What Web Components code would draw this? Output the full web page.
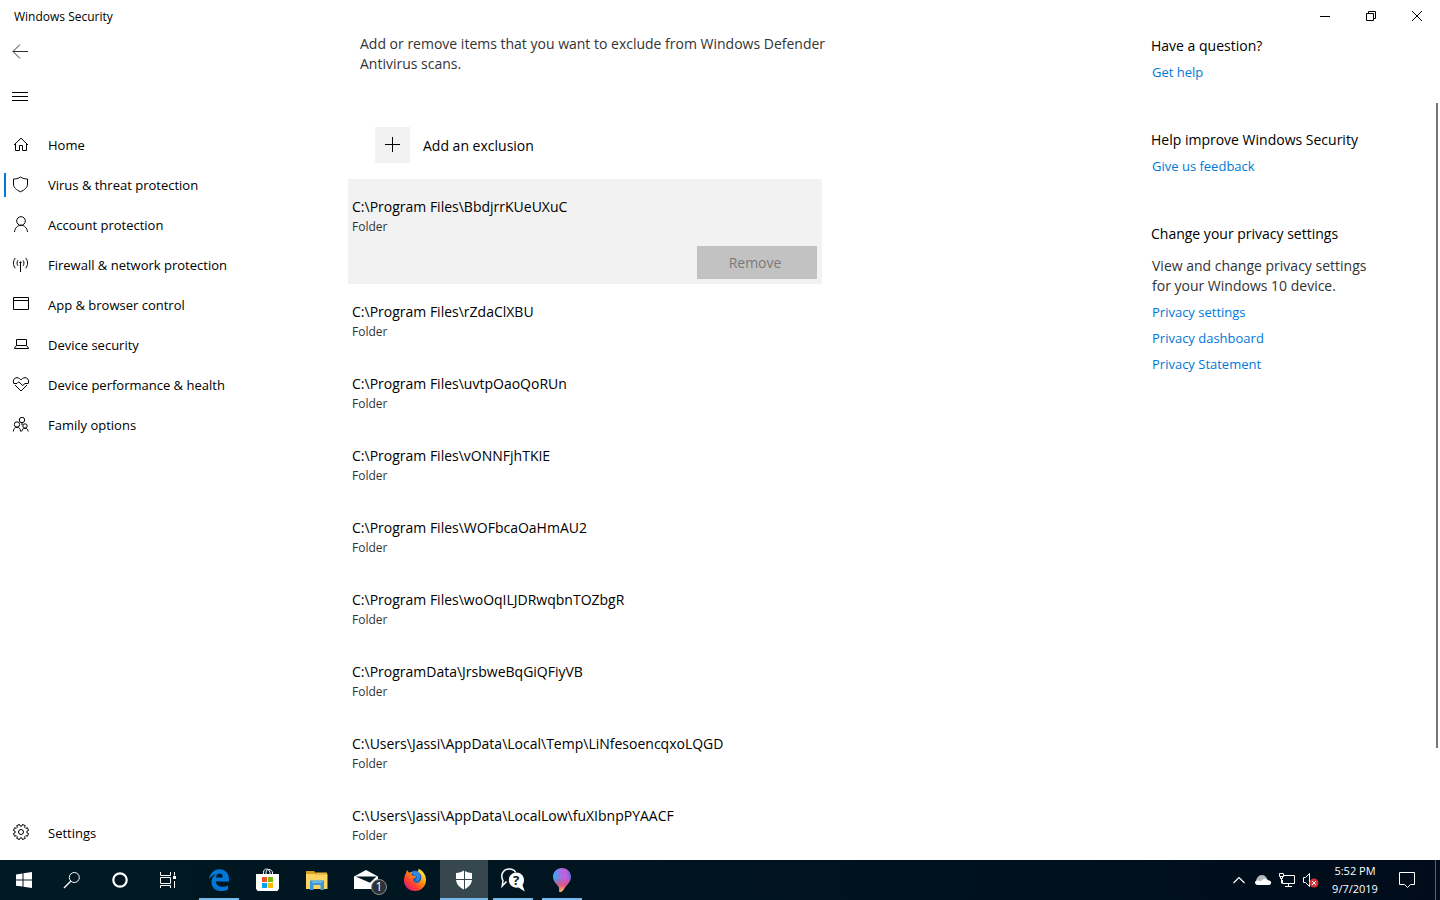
<!DOCTYPE html>
<html lang="en">
<head>
<meta charset="utf-8">
<title>Windows Security</title>
<style>
  html, body {
    height: 100%;
    margin: 0;
  }
  body {
    overflow: hidden;
    background: white;
    color: black;
    font-family: "Open Sans", "Noto Sans", sans-serif;
    font-size: 14px;
    line-height: 20px;
  }
</style>
</head>
<body>
<sec-desktop></sec-desktop>
<script>
  // Outline of a cog with eight teeth.
  const gearPath = (cx, cy, outer, inner) => {
    const points = [];
    for (let i = 0; i < 8; i++) {
      const a = i * Math.PI / 4 + Math.PI / 8;
      for (const [d, r] of [[-.24, inner], [-.2, outer], [.2, outer], [.24, inner]])
        points.push(`${(cx + r * Math.cos(a + d)).toFixed(2)} ${(cy + r * Math.sin(a + d)).toFixed(2)}`);
    }
    return `M${points.join("L")}Z`;
  };

  const dropPath = "M12 0C17 0 21 3.800 21 8.700c0 4-2.300 6.500-4.800 9-1.800 1.800-3 6-6 6.300-1.200 0-1-1.200-.9-2.500.2-2-.6-3.300-2.600-5.300C4.800 14.200 3 12 3 8.700 3 3.800 7 0 12 0z";

  // name: [width, height, markup]
  const icons = {
    // window controls
    minimize: [12, 12, `<path d="M1 6.500h10"/>`],
    restore: [12, 12, `<path d="M1.500 3.500h7v7h-7zM3.500 3.500v-2h7v7h-2"/>`],
    close: [12, 12, `<path d="M1 1l10 10M11 1L1 11"/>`],

    // navigation
    back: [18, 18, `<path d="M16 8.500H1M8 1.500L1 8.500l7 7" stroke="#333"/>`],
    menu: [18, 18, `<path d="M0 4.500h16M0 8.500h16M0 12.500h16"/>`],
    home: [18, 18, `<path d="M2 9L9 2.200 16 9M3.500 8v6.500h4v-5h3v5h4V8"/>`],
    shield: [18, 18, `<path d="M8.500 1C6.500 2.500 4 3 1.500 3v5c0 3.500 3 6 7 7.800 4-1.800 7-4.300 7-7.800V3C13 3 10.500 2.500 8.500 1z"/>`],
    account: [18, 18, `<circle cx="9" cy="5" r="4.300"/><path d="M2.500 16c.4-4 3-6.700 6.500-6.700s6.100 2.700 6.500 6.700"/>`],
    firewall: [18, 18, `<path d="M8.500 6v10M6 4.300c-1.300 1.800-1.300 3.800 0 5.600M11 4.300c1.300 1.800 1.300 3.800 0 5.600M3.300 2C.8 5 .8 9.200 3.300 12.200M13.700 2c2.500 3 2.500 7.200 0 10.200"/><circle cx="8.500" cy="6.500" r=".7"/>`],
    app: [18, 18, `<path d="M1.500 1.500h15v12h-15zM1.500 4.500h15"/>`],
    device: [18, 18, `<path d="M4.500 3.500h10v6h-10zM4.500 9.500l-2 2.500v.5h14V12l-2-2.500"/>`],
    health: [18, 18, `<path d="M1.500 7C.7 4 2.500 1.700 5 1.700 6.800 1.700 8 2.700 9 4c1-1.300 2.200-2.300 4-2.300 2.500 0 4.300 2.300 3.500 5.300M3 9l6 6 6-6"/><path d="M1.500 7.500h3.500l1.700-1.700 4 3.700 2.300-2h3.500"/>`],
    family: [18, 18, `<circle cx="10" cy="4" r="2.700"/><circle cx="5" cy="8.500" r="2.700"/><circle cx="13" cy="10" r="2.200"/><path d="M1.300 15.500c.2-2.600 1.600-4.300 3.700-4.300s3.500 1.700 3.700 4.300M9.800 15.500c.2-2 1.400-3.300 3.200-3.300s3 1.300 3.200 3.300M10 6.700v2.500"/>`],
    settings: [18, 18, `<path d="${gearPath(9, 8, 7.7, 6)}"/><circle cx="9" cy="8" r="2.500"/>`],
    plus: [18, 18, `<path d="M1 8.500h15M8.500 1v15"/>`],

    // taskbar
    start: [18, 18, `<path d="M1 3.500l6.500-1v6H1zM8.500 2.300L17 1v7.500H8.500zM1 9.500h6.500v6L1 14.700zM8.500 9.500H17V17l-8.500-1.300z" fill="#fff" stroke="none"/>`],
    search: [18, 18, `<circle cx="11.300" cy="6.500" r="5"/><path d="M7.700 10.200L1 17" stroke-width="1.300"/>`],
    cortana: [18, 18, `<circle cx="9" cy="9" r="6.700" stroke-width="2.200"/>`],
    taskview: [18, 18, `<path d="M1.500 1v3.500h10V1M1.500 6.500h10v6h-10zM1.500 17v-2.500h10V17M15.500 1v3.500M15.500 10v7"/><path d="M14 5h3v3h-3z" fill="#fff" stroke="none"/>`],
    edge: [24, 24, `<path d="M2 11.300C2.800 5.600 6.900 1.200 12.600 1.200c6.100 0 9.400 4.500 9.400 9.800v2.500H8.900c.1 3.600 3.100 5.300 6.600 5.300 2 0 3.900-.5 5.500-1.500v4.200c-2 1-4.200 1.500-6.500 1.500-6 0-10-3.500-10-8.800 0-3.400 1.700-6.100 4.600-7.600-3 .4-5.300 2-7.100 4.700zm7-1.900h6.700c0-2.600-1.100-3.900-3.200-3.900-1.900 0-3.200 1.500-3.500 3.900z" fill="#0078d7" stroke="none"/>`],
    store: [24, 24, `<path d="M7.500 7V4.500C7.500 2 9 1 10.500 1S13 2 14 4.500V7M10 7V4c.5-2 1.500-2.500 2.800-2.500C15 1.500 16.500 3 16.500 5v2"/><path d="M0 6h23v14.500l-1.500 2.500h-20L0 20.500z" fill="#fff" stroke="none"/><path d="M6 9h5v5H6z" fill="#f25022" stroke="none"/><path d="M12 9h5v5h-5z" fill="#7fba00" stroke="none"/><path d="M6 15h5v5H6z" fill="#00a4ef" stroke="none"/><path d="M12 15h5v5h-5z" fill="#ffb900" stroke="none"/>`],
    explorer: [24, 24, `<g stroke="none"><path d="M1 3h8l2 2v3H1z" fill="#d9a01c"/><path d="M1 6h21.500v15H1z" fill="#fbd464"/><path d="M11 4.500h11V7H10z" fill="#eeb93f"/><path d="M5 12.500h14V22h-3.500v-5h-7v5H5z" fill="#3c97d8"/><path d="M7 12.500h10V15H7z" fill="#69b7e8"/></g>`],
    mail: [36, 24, `<path d="M6 8.500L18 2l12 6.500V21H6z" fill="#fff" stroke="none"/><path d="M7.500 8.500h21L22 14.700z" fill="#001922" stroke="none"/>`],
    firefox: [24, 24, `<defs><linearGradient id="fx" x1="1" y1="0" x2="0.100" y2="1"><stop offset=".1" stop-color="#fff14f"/><stop offset=".4" stop-color="#ff9a12"/><stop offset=".7" stop-color="#ff3d32"/><stop offset="1" stop-color="#d9118c"/></linearGradient></defs><g stroke="none"><circle cx="12.500" cy="10.500" r="8" fill="#1f5fb8"/><path d="M3 5l1-3 2 2.700c1-.6 2.400-.7 3.700-.5L8 6.500l1.500 1.300 3.500.4c.2 1.500-2.600 2-3.300 3.300.6 3.300 4.300 4.300 6.300 2.700C19.500 11.500 19 6 15 4L15.500.8c4 1.600 7.500 5.700 7.500 11.200 0 6.300-4.600 11-11 11S1 18.300 1 12.500C1 9.700 1.700 7.500 3 5z" fill="url(#fx)"/><path d="M9 4c2-1.300 5-.8 6.500.8 1.500 1.700 2 4 1 6.200-1 2-3.500 2.500-5 1.500 1.500-.5 2.500-2 2.500-4L10 6.500z" fill="#2b8be0"/></g>`],
    defender: [24, 24, `<path d="M12 2.500C9.500 4 7 5 4 5v6c0 5 3.500 8.500 8 10.500 4.500-2 8-5.500 8-10.500V5c-3 0-5.500-1-8-2.500z" fill="#fff" stroke="none"/><path d="M12.500 2v20M3 11.500h18" stroke="#37474e" stroke-width="1"/>`],
    help: [24, 24, `<path d="M5.500 13.500L1.200 18l.8-5.500C-.8 7.500 1.500 1 8.500 1c2.700 0 5 1.300 6 3.300" stroke-width="1.500"/><path d="M15.500 4.500c4.200 0 7.500 3.200 7.500 7.500 0 2-.6 3.800-1.500 5.200l2.300 6.300-6.300-4c-5.500 1-9.700-2.800-9.700-7.500 0-4.200 3.500-7.500 7.700-7.500z" fill="#fff" stroke="none"/>`],
    paint: [24, 24, `<defs><linearGradient id="sweep" x1="0" y1=".4" x2="1" y2=".2"><stop offset="0" stop-color="#22b8ee"/><stop offset=".4" stop-color="#9a74e8"/><stop offset=".7" stop-color="#c95fd8"/><stop offset="1" stop-color="#5b6bea"/></linearGradient><linearGradient id="tail" x1="0" y1="0" x2="0" y2="1"><stop offset=".4" stop-color="#e0447a" stop-opacity="0"/><stop offset=".7" stop-color="#ec4f74" stop-opacity=".8"/><stop offset="1" stop-color="#ffc04a"/></linearGradient></defs><path d="${dropPath}" fill="url(#sweep)" stroke="none"/><path d="${dropPath}" fill="url(#tail)" stroke="none"/>`],

    // notification area
    chevron: [18, 18, `<path d="M3.500 12L9 6.500l5.500 5.500" stroke-width="1.200"/>`],
    cloud: [18, 18, `<g stroke="none"><path d="M2 10.500C2.500 3.500 10 1.500 13 7.500l-6 6z" fill="#b4b9be"/><path d="M4 14c-4-.2-4-4.200-.8-4.500 1.300-.1 2.500.2 3.500 1C8 7.500 12.800 6.500 14 9.200c4 0 4.200 4.600.7 4.800z" fill="#fff"/></g>`],
    network: [18, 18, `<path d="M6 4.500h10.500v8H4.500V9M10.500 12.500v3M7 15.500h7M1.500 2.500h4v3h-4zM2.500 5.500v2h2v-2M3.500 7.500v5"/>`],
    volume: [20, 18, `<path d="M2.500 6.500h2l4-4v13l-4-4h-2z"/><circle cx="13" cy="12" r="4.500" fill="#d13438" stroke="none"/><path d="M11 10l4 4M15 10l-4 4"/>`],
    action: [18, 18, `<path d="M1.500 1.500h15v12h-4l-3 3-3-3h-5z"/>`],
  };

  const define = (name, style, body) => {
    window.customElements.define(name, class extends HTMLElement {
      connectedCallback() {
        if (this.shadowRoot)
          return;
        this.attachShadow({ mode: "open" });
        this.shadowRoot.innerHTML = `
          <style>${style}</style>
          ${typeof body == "function" ? body(this) : body}`;
      }
    });
  };

  const buttonReset = `
    button {
      box-sizing: border-box;
      margin: 0;
      padding: 0;
      border: 0;
      background: none;
      color: inherit;
      font: inherit;
    }
    button:focus-visible {
      outline: 2px solid currentcolor;
      outline-offset: -2px;
    }`;

  define("sec-icon", `
    :host {
      display: block;
      flex: none;
    }
    svg {
      display: block;
      fill: none;
      stroke: currentcolor;
      stroke-width: 1;
    }`,
    el => {
      const [w, h, markup] = icons[el.getAttribute("name")];
      return `<svg width="${w}" height="${h}" viewBox="0 0 ${w} ${h}" aria-hidden="true">${markup}</svg>`;
    });

  define("window-titlebar", `
    ${buttonReset}
    :host {
      display: flex;
      justify-content: space-between;
      height: 32px;
      font-size: 12px;
    }
    .title {
      padding: 7px 0 0 14px;
    }
    .controls {
      display: flex;
    }
    button {
      display: grid;
      place-items: center;
      width: 46px;
      height: 32px;
    }
    button:hover {
      background: #e5e5e5;
    }`,
    `<div class="title"><slot></slot></div>
    <div class="controls">
      <button aria-label="Minimize"><sec-icon name="minimize"></sec-icon></button>
      <button aria-label="Restore"><sec-icon name="restore"></sec-icon></button>
      <button aria-label="Close"><sec-icon name="close"></sec-icon></button>
    </div>`);

  define("nav-item", `
    ${buttonReset}
    :host {
      display: block;
      font-size: 13px;
    }
    button {
      display: flex;
      align-items: center;
      gap: 18px;
      width: 100%;
      height: 40px;
      padding-left: 12px;
      text-align: left;
      background: linear-gradient(#0078d7, #0078d7) 4px center / 2px 0 no-repeat;
    }
    button:hover {
      background-color: #f2f2f2;
    }
    :host([selected]) button {
      background-size: 2px 24px;
    }`,
    el => `
    <button aria-label="${el.getAttribute("label") || el.textContent}">
      <sec-icon name="${el.getAttribute("icon")}"></sec-icon>
      <slot></slot>
    </button>`);

  define("sec-nav", `
    :host {
      display: flex;
      flex-direction: column;
      box-sizing: border-box;
      padding-bottom: 7px;
    }
    .top {
      display: flex;
      flex-direction: column;
      gap: 5px;
      padding-bottom: 8px;
    }
    nav {
      flex: 1;
    }`,
    `<div class="top">
      <nav-item icon="back" label="Back"></nav-item>
      <nav-item icon="menu" label="Navigation menu"></nav-item>
    </div>
    <nav>
      <nav-item icon="home">Home</nav-item>
      <nav-item icon="shield" selected>Virus &amp; threat protection</nav-item>
      <nav-item icon="account">Account protection</nav-item>
      <nav-item icon="firewall">Firewall &amp; network protection</nav-item>
      <nav-item icon="app">App &amp; browser control</nav-item>
      <nav-item icon="device">Device security</nav-item>
      <nav-item icon="health">Device performance &amp; health</nav-item>
      <nav-item icon="family">Family options</nav-item>
    </nav>
    <nav-item icon="settings">Settings</nav-item>`);

  define("exclusion-item", `
    ${buttonReset}
    :host {
      display: flex;
      flex-direction: column;
      padding: 18px 4px 14px;
    }
    :host([selected]) {
      background: #f2f2f2;
      padding: 18px 5px 5px 4px;
    }
    .kind {
      font-size: 12px;
      color: #333;
    }
    button {
      display: none;
      align-self: flex-end;
      width: 120px;
      height: 33px;
      margin-top: 9px;
      padding-right: 4px;
      background: #c2c2c2;
      color: #7a7a7a;
    }
    :host([selected]) button {
      display: block;
    }`,
    `<div class="path"><slot></slot></div>
    <div class="kind">Folder</div>
    <button disabled>Remove</button>`);

  define("exclusion-list", `
    ${buttonReset}
    :host {
      display: block;
      overflow: hidden;
    }
    p {
      max-width: 488px;
      margin: 0;
      padding: 2px 0 53px 12px;
      color: #333;
    }
    .add {
      display: flex;
      align-items: center;
      gap: 13px;
      margin: 0 0 16px 27px;
    }
    .plus {
      display: grid;
      place-items: center;
      width: 35px;
      height: 36px;
      background: #f2f2f2;
    }
    .label {
      padding-top: 2px;
    }
    .items {
      max-width: 474px;
    }`,
    `<p>Add or remove items that you want to exclude from Windows Defender Antivirus scans.</p>
    <button class="add">
      <span class="plus"><sec-icon name="plus"></sec-icon></span>
      <span class="label">Add an exclusion</span>
    </button>
    <div class="items"><slot></slot></div>`);

  define("help-section", `
    :host {
      display: block;
    }
    h2 {
      margin: 0;
      font-size: 14px;
      font-weight: normal;
    }
    .links {
      display: flex;
      flex-direction: column;
      align-items: flex-start;
      gap: 6px;
      padding: 6px 0 0 1px;
      font-size: 13px;
    }
    ::slotted(p) {
      max-width: 232px;
      margin: 6px 0 0;
      color: #333;
      font-size: 14px;
    }
    ::slotted(a) {
      color: #0078d7;
      text-decoration: none;
    }`,
    el => `
    <h2>${el.getAttribute("heading")}</h2>
    <div class="links"><slot></slot></div>`);

  define("help-pane", `
    :host {
      display: flex;
      flex-direction: column;
      gap: 48px;
      padding-top: 4px;
    }`,
    `<help-section heading="Have a question?"><a href="#help">Get help</a></help-section>
    <help-section heading="Help improve Windows Security"><a href="#feedback">Give us feedback</a></help-section>
    <help-section heading="Change your privacy settings">
      <p>View and change privacy settings for your Windows 10 device.</p>
      <a href="#privacy">Privacy settings</a>
      <a href="#dashboard">Privacy dashboard</a>
      <a href="#statement">Privacy Statement</a>
    </help-section>`);

  define("scroll-track", `
    :host {
      display: grid;
      grid-template-rows: 71fr 645fr 112fr;
      width: 2px;
      padding: 0 2px;
    }
    .thumb {
      grid-row: 2;
      background: #767676;
    }`,
    `<div class="thumb"></div>`);

  define("security-window", `
    :host {
      display: flex;
      flex-direction: column;
      min-height: 0;
    }
    .body {
      display: flex;
      flex: 1;
      min-height: 0;
    }
    sec-nav {
      flex: 0 0 320px;
    }
    exclusion-list {
      flex: 1;
      padding-left: 28px;
    }
    help-pane {
      flex: 0 0 283px;
    }`,
    `<window-titlebar>Windows Security</window-titlebar>
    <div class="body">
      <sec-nav></sec-nav>
      <exclusion-list>
        <exclusion-item selected>C:\\Program Files\\BbdjrrKUeUXuC</exclusion-item>
        <exclusion-item>C:\\Program Files\\rZdaClXBU</exclusion-item>
        <exclusion-item>C:\\Program Files\\uvtpOaoQoRUn</exclusion-item>
        <exclusion-item>C:\\Program Files\\vONNFjhTKIE</exclusion-item>
        <exclusion-item>C:\\Program Files\\WOFbcaOaHmAU2</exclusion-item>
        <exclusion-item>C:\\Program Files\\woOqILJDRwqbnTOZbgR</exclusion-item>
        <exclusion-item>C:\\ProgramData\\JrsbweBqGiQFiyVB</exclusion-item>
        <exclusion-item>C:\\Users\\Jassi\\AppData\\Local\\Temp\\LiNfesoencqxoLQGD</exclusion-item>
        <exclusion-item>C:\\Users\\Jassi\\AppData\\LocalLow\\fuXIbnpPYAACF</exclusion-item>
      </exclusion-list>
      <help-pane></help-pane>
      <scroll-track></scroll-track>
    </div>`);

  define("task-button", `
    ${buttonReset}
    :host {
      display: block;
    }
    button {
      position: relative;
      display: grid;
      place-items: center;
      width: 48px;
      height: 40px;
      background: linear-gradient(#76b9ed, #76b9ed) center bottom / 0 2px no-repeat;
    }
    :host([running]) button {
      background-size: 40px 2px;
    }
    :host([active]) button {
      background-color: #37474e;
      background-size: 48px 2px;
    }
    ::slotted(.badge) {
      position: absolute;
      right: 3px;
      bottom: 5px;
      width: 14px;
      height: 14px;
      border: 1px solid #8a9094;
      border-radius: 50%;
      background: #2d3235;
      font-size: 12px;
      line-height: 14px;
    }
    ::slotted(.mark) {
      position: absolute;
      left: 21px;
      top: 10px;
      width: 12px;
      color: #001922;
      font-size: 13px;
      font-weight: bold;
    }`,
    el => `
    <button aria-label="${el.getAttribute("label")}">
      <sec-icon name="${el.getAttribute("icon")}"></sec-icon>
      <slot></slot>
    </button>`);

  define("system-tray", `
    ${buttonReset}
    :host {
      display: flex;
    }
    button {
      display: grid;
      place-items: center;
      width: 24px;
      height: 40px;
    }
    .clock {
      width: 64px;
      font-size: 11px;
      line-height: 18px;
      align-content: center;
    }
    .action {
      width: 40px;
    }
    .desktop {
      width: 5px;
      margin-left: 8px;
      border-left: 1px solid #5a636c;
    }`,
    `<button aria-label="Show hidden icons"><sec-icon name="chevron"></sec-icon></button>
    <button aria-label="OneDrive"><sec-icon name="cloud"></sec-icon></button>
    <button aria-label="Network"><sec-icon name="network"></sec-icon></button>
    <button aria-label="Volume"><sec-icon name="volume"></sec-icon></button>
    <button class="clock"><span>5:52 PM</span><span>9/7/2019</span></button>
    <button class="action" aria-label="Notifications"><sec-icon name="action"></sec-icon></button>
    <button class="desktop" aria-label="Show desktop"></button>`);

  define("task-bar", `
    :host {
      display: flex;
      justify-content: space-between;
      height: 40px;
      background: linear-gradient(90deg, #001922, #001420 50%, #000c1a);
      color: white;
    }
    .left, .apps {
      display: flex;
    }
    .apps {
      gap: 1px;
      padding-left: 3px;
    }`,
    `<div class="left">
      <task-button icon="start" label="Start"></task-button>
      <task-button icon="search" label="Search"></task-button>
      <task-button icon="cortana" label="Cortana"></task-button>
      <task-button icon="taskview" label="Task View"></task-button>
      <div class="apps">
        <task-button icon="edge" label="Microsoft Edge" running></task-button>
        <task-button icon="store" label="Microsoft Store"></task-button>
        <task-button icon="explorer" label="File Explorer"></task-button>
        <task-button icon="mail" label="Mail"><span class="badge">1</span></task-button>
        <task-button icon="firefox" label="Firefox"></task-button>
        <task-button icon="defender" label="Windows Security" active></task-button>
        <task-button icon="help" label="Get Help" running><span class="mark">?</span></task-button>
        <task-button icon="paint" label="Paint 3D" running></task-button>
      </div>
    </div>
    <system-tray></system-tray>`);

  define("sec-desktop", `
    :host {
      display: flex;
      flex-direction: column;
      height: 100vh;
    }
    security-window {
      flex: 1;
    }
    task-bar {
      flex: none;
    }`,
    `<security-window></security-window>
    <task-bar></task-bar>`);
</script>
</body>
</html>
